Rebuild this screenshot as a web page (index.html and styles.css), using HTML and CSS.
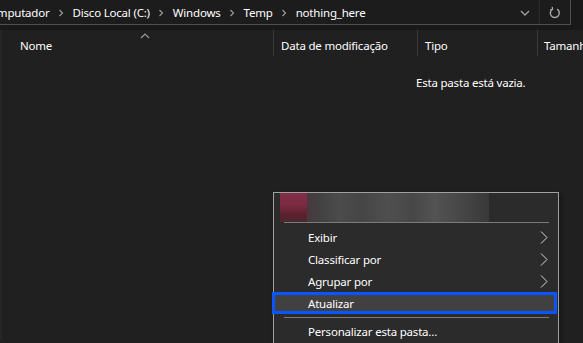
FILE: index.html
```html
<!DOCTYPE html>
<html lang="pt-BR">
<head>
    <meta charset="UTF-8">
    <title>Temp - nothing_here</title>
    <link rel="stylesheet" href="styles.css">
</head>
<body>
    <div class="topbar">
        <div class="address">
            <div class="crumbs">
                <span class="crumb first">Computador</span>
                <span class="sep"><svg width="6" height="8" viewBox="0 0 6 8"><polyline points="1.5,1 4.5,4 1.5,7" fill="none" stroke="#9a9a9a" stroke-width="1.2"/></svg></span>
                <span class="crumb">Disco Local (C:)</span>
                <span class="sep"><svg width="6" height="8" viewBox="0 0 6 8"><polyline points="1.5,1 4.5,4 1.5,7" fill="none" stroke="#9a9a9a" stroke-width="1.2"/></svg></span>
                <span class="crumb">Windows</span>
                <span class="sep"><svg width="6" height="8" viewBox="0 0 6 8"><polyline points="1.5,1 4.5,4 1.5,7" fill="none" stroke="#9a9a9a" stroke-width="1.2"/></svg></span>
                <span class="crumb">Temp</span>
                <span class="sep"><svg width="6" height="8" viewBox="0 0 6 8"><polyline points="1.5,1 4.5,4 1.5,7" fill="none" stroke="#9a9a9a" stroke-width="1.2"/></svg></span>
                <span class="crumb">nothing_here</span>
            </div>
            <div class="dropdown">
                <svg width="10" height="6" viewBox="0 0 10 6"><polyline points="1,1 5,5 9,1" fill="none" stroke="#a0a0a0" stroke-width="1.4"/></svg>
            </div>
            <div class="refresh">
                <svg width="12" height="13" viewBox="0 0 12 13"><path d="M8.2 3.2 A4.5 4.5 0 1 1 3.6 3.1" fill="none" stroke="#a8a8a8" stroke-width="1.4"/><polyline points="3.2,0.8 3.6,3.3 1.2,3.9" fill="none" stroke="#a8a8a8" stroke-width="1.3"/></svg>
            </div>
        </div>
    </div>

    <div class="content">
        <div class="columns">
            <div class="col col-name">Nome
                <svg class="sort" width="10" height="6" viewBox="0 0 10 6"><polyline points="1,5 5,1 9,5" fill="none" stroke="#9a9a9a" stroke-width="1.2"/></svg>
            </div>
            <div class="col col-date">Data de modificação</div>
            <div class="col col-type">Tipo</div>
            <div class="col col-size">Tamanho</div>
        </div>
        <div class="empty">Esta pasta está vazia.</div>
    </div>

    <div class="menu">
        <div class="menu-head">
            <div class="blur blur-red"></div>
            <div class="blur blur-gray"></div>
        </div>
        <div class="divider"></div>
        <div class="item">Exibir<svg class="arrow" width="8" height="13" viewBox="0 0 8 13"><polyline points="1,0.5 7,6.5 1,12.5" fill="none" stroke="#d8d8d8" stroke-width="1"/></svg></div>
        <div class="item">Classificar por<svg class="arrow" width="8" height="13" viewBox="0 0 8 13"><polyline points="1,0.5 7,6.5 1,12.5" fill="none" stroke="#d8d8d8" stroke-width="1"/></svg></div>
        <div class="item">Agrupar por<svg class="arrow" width="8" height="13" viewBox="0 0 8 13"><polyline points="1,0.5 7,6.5 1,12.5" fill="none" stroke="#d8d8d8" stroke-width="1"/></svg></div>
        <div class="item focused">Atualizar</div>
        <div class="divider"></div>
        <div class="item last">Personalizar esta pasta...</div>
    </div>
</body>
</html>
```

FILE: styles.css
```css
body {
    margin: 0;
    height: 343px;
    overflow: hidden;
    background-color: #202020;
    color: #fff;
    font-family: "Noto Sans", "Open Sans", sans-serif;
    font-size: 11.5px;
    letter-spacing: -0.2px;
    position: relative;
}

.topbar {
    height: 33px;
    background-color: #191919;
}

.address {
    display: flex;
    align-items: center;
    margin-top: -3px;
    margin-left: -10px;
    width: 581px;
    height: 28px;
    background-color: #1c1c1c;
    border: 1px solid #4f4f4f;
    box-sizing: border-box;
    border-left: none;
}

.crumbs {
    flex: 1;
    display: flex;
    align-items: center;
    padding-top: 3px;
    white-space: nowrap;
    overflow: hidden;
}

.crumb.first {
    margin-left: -7px;
}

.sep {
    display: flex;
    width: 23px;
    justify-content: center;
    padding-top: 1px;
}

.dropdown {
    width: 30px;
    height: 100%;
    display: flex;
    align-items: center;
    justify-content: center;
    padding-top: 3px;
    box-sizing: border-box;
    border-right: 1px solid #2c2c2c;
}

.refresh {
    width: 30px;
    height: 100%;
    display: flex;
    align-items: center;
    justify-content: center;
    padding-top: 3px;
    box-sizing: border-box;
}

.content {
    border-left: 2px solid #262626;
    height: 310px;
}

.columns {
    display: flex;
    height: 26px;
}

.col {
    display: flex;
    align-items: center;
    padding-left: 7px;
    padding-top: 5px;
    box-sizing: border-box;
    border-right: 1px solid #3b3b3b;
    white-space: nowrap;
    overflow: hidden;
}

.col-name {
    width: 272px;
    padding-left: 18px;
    position: relative;
}

.sort {
    position: absolute;
    left: 138px;
    top: 3px;
}

.col-date {
    width: 144px;
}

.col-type {
    width: 120px;
}

.col-size {
    flex: 1;
    border-right: none;
    padding-left: 6px;
}

.empty {
    margin-top: 19px;
    padding-left: 414px;
}

.menu {
    position: absolute;
    left: 273px;
    top: 192px;
    width: 286px;
    height: 170px;
    box-sizing: border-box;
    background-color: #2b2b2b;
    border: 1px solid #a0a0a0;
    box-shadow: 2px 2px 4px rgba(0, 0, 0, 0.35);
}

.menu-head {
    display: flex;
    height: 29px;
    padding-left: 6px;
}

.blur-red {
    width: 27px;
    background: linear-gradient(180deg, #82304a 0%, #7a2a40 45%, #5c1f2d 75%, #4a2a30 100%);
}

.blur-gray {
    width: 182px;
    background: linear-gradient(90deg, #4a3a3f 0%, #454545 8%, #4f4f4f 18%, #484848 30%, #535353 45%, #4a4a4a 58%, #575757 70%, #4c4c4c 82%, #3a3a3a 100%);
    opacity: 0.9;
}

.divider {
    height: 1px;
    margin: 0 9px 0 10px;
    background-color: #7a7a7a;
}

.menu-head + .divider {
    margin-bottom: 3px;
}

.item {
    display: flex;
    align-items: center;
    justify-content: space-between;
    height: 22px;
    padding: 0 10px 0 34px;
}

.item.last {
    margin-top: 2px;
}

.arrow {
    margin-top: 1px;
}

.item.focused {
    background-color: #414141;
    outline: 3px solid #0a55ff;
    outline-offset: -3px;
    margin: 0 1px 0 -2px;
    padding-left: 36px;
    margin-bottom: 3px;
}
```
